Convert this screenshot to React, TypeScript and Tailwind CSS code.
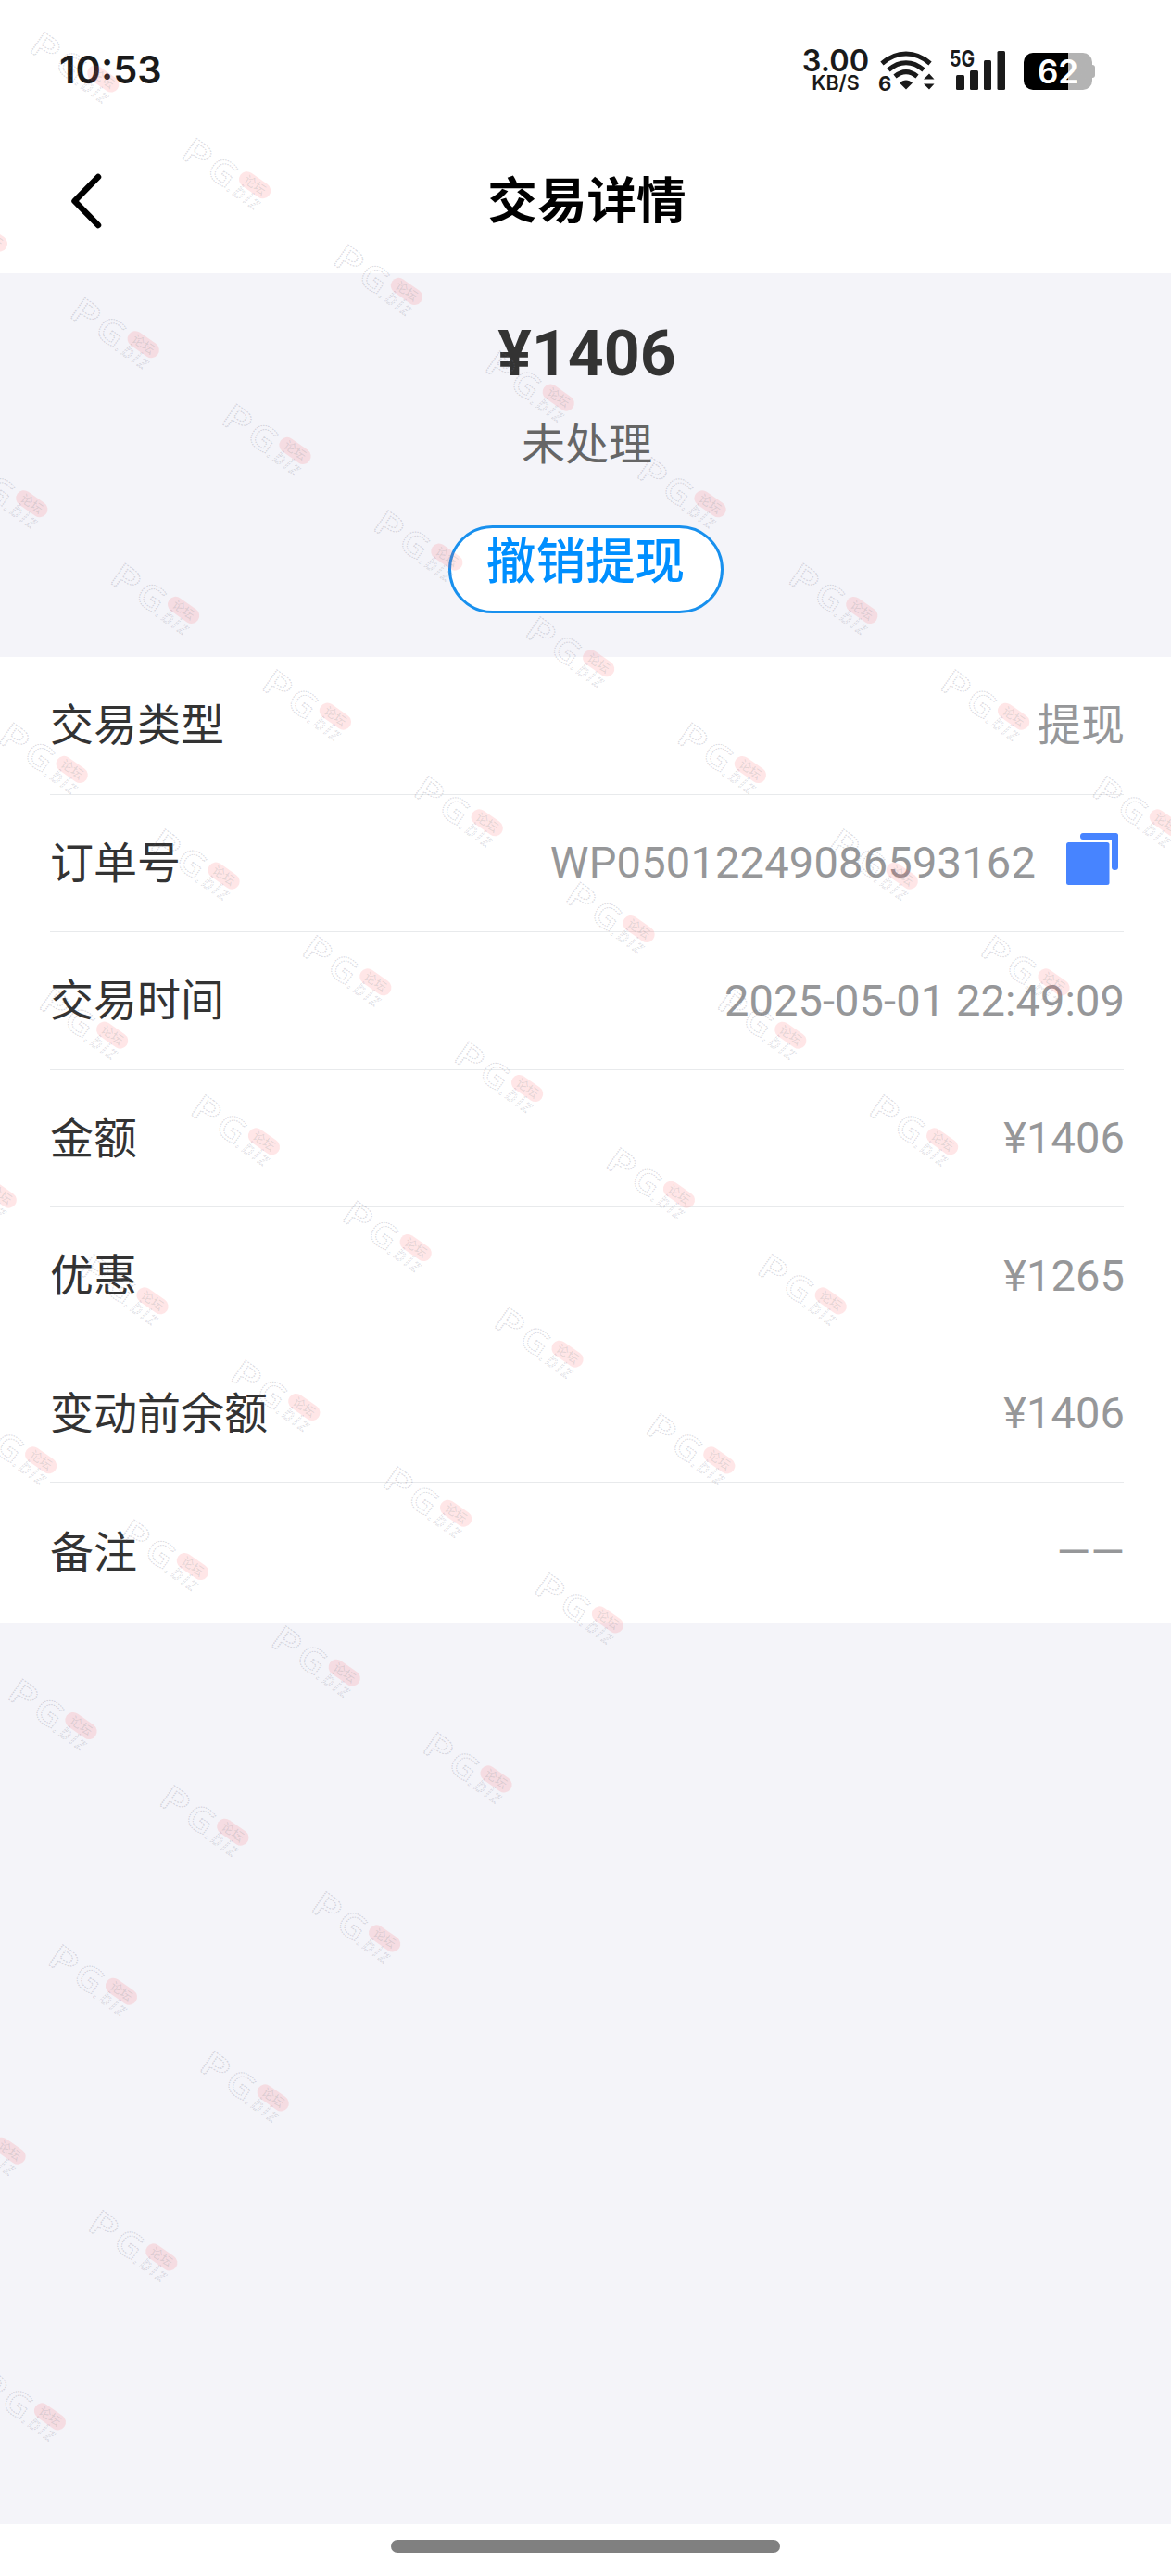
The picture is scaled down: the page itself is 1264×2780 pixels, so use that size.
import type { ReactNode } from "react";

interface DetailRow {
  label: string;
  value: string;
  copyable?: boolean;
}

const rows: DetailRow[] = [
  { label: "交易类型", value: "提现" },
  { label: "订单号", value: "WP05012249086593162", copyable: true },
  { label: "交易时间", value: "2025-05-01 22:49:09" },
  { label: "金额", value: "¥1406" },
  { label: "优惠", value: "¥1265" },
  { label: "变动前余额", value: "¥1406" },
  { label: "备注", value: "——" },
];

function WifiIcon() {
  return (
    <svg width="60" height="46" viewBox="0 0 60 46" fill="none" stroke="#1a1a1a" className="overflow-visible font-['Inter',sans-serif]">
      <path d="M3 14.500C19 .5 39 .5 55 14.500" strokeWidth="5" />
      <path d="M10 21.500C22 11 36 11 48 21.500" strokeWidth="5" />
      <path d="M17 28.500C25 22 33 22 41 28.500" strokeWidth="5" />
      <path d="M22 35.500C26 31.500 32 31.500 36 35.500L29 42.500Z" fill="#1a1a1a" stroke="none" />
      <path d="M48 31.500L54 25.500L59.500 31.500ZM48 36.500H59.500L54 42.500Z" fill="#1a1a1a" stroke="none" />
      <text x="-1" y="44" fontSize="22" fontWeight="700" fill="#1a1a1a" stroke="none">
        6
      </text>
    </svg>
  );
}

function SignalIcon() {
  return (
    <svg width="60" height="44" viewBox="0 0 60 44" fill="#1a1a1a" className="overflow-visible font-['Inter',sans-serif]">
      <rect x="6" y="27" width="9" height="16" rx="1.500" />
      <rect x="21" y="22" width="9" height="21" rx="1.500" />
      <rect x="36" y="11" width="8" height="32" rx="1.500" />
      <rect x="50.500" y="1" width="8.500" height="42" rx="1.500" />
      <text x="-1" y="18" fontSize="24" fontWeight="700" textLength="27" lengthAdjust="spacingAndGlyphs">
        5G
      </text>
    </svg>
  );
}

function Battery() {
  return (
    <div className="flex items-center">
      <div className="flex h-10 w-[74px] items-center justify-center rounded-[10px] bg-linear-to-r from-black from-65% to-[#b3b3b3] to-65% text-[35px] leading-10 font-semibold text-white">
        62
      </div>
      <div className="h-[14px] w-[3px] rounded-r-[3px] bg-[#b3b3b3]" />
    </div>
  );
}

function StatusBar() {
  return (
    <div className="flex h-[140px] items-start justify-between pt-[54px] pr-[82px] pl-[64px] font-['Inter',sans-serif] text-[#1a1a1a]">
      <span className="text-[41.500px] leading-[42px] font-semibold">10:53</span>
      <div className="flex items-start">
        <div className="mr-[12px] flex w-[70px] flex-col items-center font-semibold">
          <span className="text-[32.500px] leading-[23px]">3.00</span>
          <span className="mt-[3px] text-[21.500px] leading-[18px]">KB/S</span>
        </div>
        <WifiIcon />
        <div className="ml-[17px]">
          <SignalIcon />
        </div>
        <div className="mt-[3px] ml-[19px]">
          <Battery />
        </div>
      </div>
    </div>
  );
}

function Header() {
  return (
    <div className="grid h-[155px] grid-cols-3 items-center">
      <svg width="40" height="64" viewBox="0 0 40 64" fill="none" className="mt-[-1px] ml-[73px]">
        <path d="M33 6L7.500 32L33 58" stroke="#000" strokeWidth="6.500" strokeLinecap="round" strokeLinejoin="round" />
      </svg>
      <h1 className="pt-[1px] pl-[3px] text-center text-[53.600px] leading-[60px] font-bold text-black">交易详情</h1>
    </div>
  );
}

function CopyIcon() {
  return (
    <svg width="56" height="56" viewBox="0 0 56 56" fill="#4784ff">
      <rect y="10" width="46.500" height="46" rx="2.500" />
      <path d="M18 0H53.500Q56 0 56 2.500V37Q56 40 52.500 40Q49 40 49 37V7H18Q15 7 15 3.500Q15 0 18 0Z" />
    </svg>
  );
}

function Row({ label, last, children }: { label: string; last: boolean; children: ReactNode }) {
  return (
    <div
      className={
        last
          ? "flex h-[150px] items-center justify-between"
          : "flex h-[148.500px] items-center justify-between border-b border-[#e8eaec]"
      }
    >
      <span className="pt-[1px] text-[#333]">{label}</span>
      <div className="flex items-center text-[#969799]">{children}</div>
    </div>
  );
}

// Watermarks sit on a skewed lattice: 8 per diagonal, 11 diagonals.
const marks = Array.from({ length: 11 }, (_, b) =>
  Array.from({ length: 8 }, (_, a) => ({
    x: 31 + a * 163.8 - b * 120.4,
    y: 55 + a * 114.7 + b * 172,
  })),
)
  .flat()
  .filter((m) => m.x > -100 && m.x < 1264);

function Watermarks() {
  return (
    <svg className="pointer-events-none absolute inset-0 h-full w-full" fill="none">
      {marks.map((m) => (
        <g key={`${m.x}-${m.y}`} transform={`translate(${m.x} ${m.y}) rotate(35)`}>
          <g className="font-['Open_Sans',sans-serif]" stroke="#6b6b80" strokeOpacity="0.24">
            <text x="-2" y="0" fontSize="37" fontWeight="600" strokeWidth="1.200" strokeDasharray="1.500 1" textLength="30" lengthAdjust="spacingAndGlyphs">
              P
            </text>
            <text x="32" y="0" fontSize="37" fontWeight="600" strokeWidth="1.200" strokeDasharray="1.500 1" textLength="29" lengthAdjust="spacingAndGlyphs">
              G
            </text>
            <text x="61" y="1" fontSize="20" fontStyle="italic" strokeWidth="0.800" strokeDasharray="2 1" textLength="38" lengthAdjust="spacing">
              .biz
            </text>
          </g>
          <rect x="64" y="-30" width="38" height="17" rx="8.500" fill="#ff5a5f" fillOpacity="0.150" />
          <text x="70" y="-17" fontSize="13" fill="#5a7a7a" fillOpacity="0.180" className="font-['Noto_Sans_CJK_SC',sans-serif]">
            论坛
          </text>
        </g>
      ))}
    </svg>
  );
}

export default function App() {
  return (
    <div className="relative flex h-[2780px] w-[1264px] flex-col overflow-hidden bg-white font-['Roboto','Noto_Sans_CJK_SC',sans-serif]">
      <StatusBar />
      <Header />

      <section className="flex h-[414px] flex-col items-center bg-[#f4f4f9] pt-[47px]">
        <p className="pl-[3px] text-[68px] leading-[80px] font-bold text-[#333]">¥1406</p>
        <p className="mt-[28px] pl-[3px] text-[47px] leading-[60px] text-[#666]">未处理</p>
        <button
          type="button"
          className="mt-[57px] flex h-[95px] w-[297px] items-start justify-center rounded-full border-[3px] border-[#1890ee] bg-white pt-[7px] text-[53.600px] leading-[60px] font-medium text-[#008fff]"
        >
          撤销提现
        </button>
      </section>

      <section className="h-[1042px] bg-white pr-[51px] pl-[54px] text-[47px] leading-[60px]">
        {rows.map((row, i) => (
          <Row key={row.label} label={row.label} last={i === rows.length - 1}>
            <span className={row.copyable ? "tracking-[0.200px]" : "-mr-px tracking-[0.100px]"}>{row.value}</span>
            {row.copyable && (
              <div className="mt-[-8px] mr-[6px] ml-[33px]">
                <CopyIcon />
              </div>
            )}
          </Row>
        ))}
      </section>

      <div className="grow bg-[#f4f4f9]" />
      <div className="flex h-14 justify-center pt-[17px]">
        <div className="h-[14px] w-[420px] rounded-full bg-[#808080]" />
      </div>

      <Watermarks />
    </div>
  );
}
